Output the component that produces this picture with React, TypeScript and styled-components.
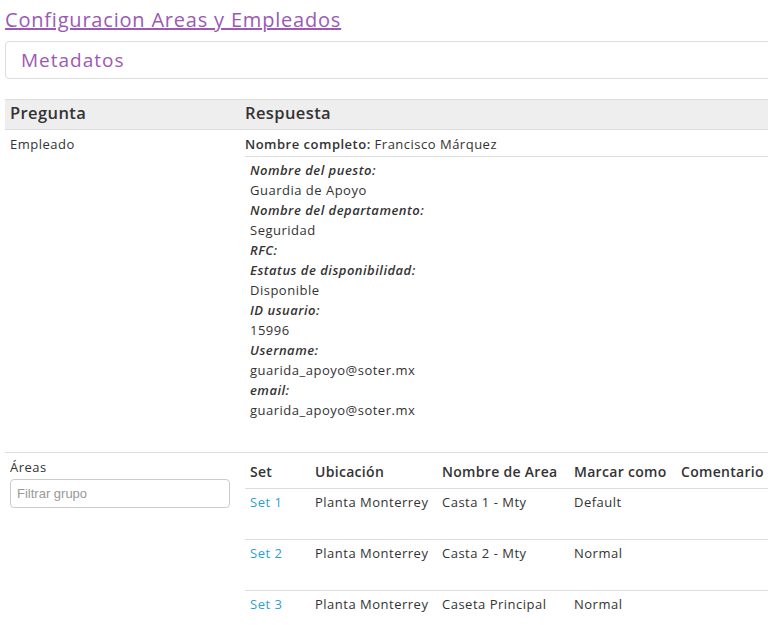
import React from 'react';
import styled, { createGlobalStyle } from 'styled-components';

const GlobalStyle = createGlobalStyle`
  html, body {
    margin: 0;
    padding: 0;
    overflow: hidden;
    background: #fff;
  }
  body {
    font-family: "Open Sans", "Noto Sans", sans-serif;
    color: #333;
    font-size: 13px;
    letter-spacing: 0.5px;
  }
`;

const Page = styled.div`
  width: 820px;
  padding: 6px 0 0 5px;
`;

const TitleLink = styled.a`
  display: inline-block;
  font-size: 20px;
  line-height: 28px;
  letter-spacing: 0.8px;
  color: #9b59b6;
  text-decoration: underline;
  cursor: pointer;
`;

const Panel = styled.div`
  margin-top: 7px;
  border: 1px solid #ddd;
  border-radius: 4px;
  height: 36px;
  display: flex;
  align-items: center;
  padding-left: 15px;
`;

const PanelTitle = styled.div`
  font-size: 19px;
  letter-spacing: 1px;
  color: #9b59b6;
`;

const Table = styled.table`
  margin-top: 20px;
  width: 100%;
  border-collapse: collapse;
`;

const HeadCell = styled.th<{ $w?: number }>`
  background: #eee;
  border-top: 1px solid #ddd;
  border-bottom: 1px solid #ddd;
  text-align: left;
  font-size: 16.5px;
  font-weight: 600;
  letter-spacing: 0.4px;
  height: 25px;
  padding: 0 5px 4px;
  color: #333;
  ${({ $w }) => ($w ? `width: ${$w}px;` : '')}
`;

const Cell = styled.td<{ $w?: number; $inner?: boolean }>`
  vertical-align: top;
  padding: ${({ $inner }) => ($inner ? '0 0 0 5px' : '4px 5px 5px')};
  line-height: 20px;
  ${({ $w }) => ($w ? `width: ${$w}px;` : '')}
`;

const Row = styled.tr<{ $border?: boolean }>`
  ${({ $border }) => ($border ? 'border-top: 1px solid #ddd;' : '')}
`;

const FullName = styled.div`
  padding-bottom: 2px;
  border-bottom: 1px solid #ddd;
`;

const Strong = styled.span`
  font-weight: 600;
`;

const Details = styled.div`
  padding: 3px 5px 27px;
`;

const Label = styled.div`
  font-style: italic;
  font-weight: 600;
`;

const Value = styled.div``;

const AreasLabel = styled.div`
  margin-top: 0;
`;

const FilterInput = styled.input`
  display: block;
  margin-top: 2px;
  box-sizing: border-box;
  width: 220px;
  height: 29px;
  border: 1px solid #ccc;
  border-radius: 4px;
  padding: 0 6px;
  font-family: "Liberation Sans", Arial, sans-serif;
  font-size: 13px;
  letter-spacing: 0;
  color: #555;
  &::placeholder {
    color: #999;
  }
`;

const InnerTable = styled.table`
  border-collapse: collapse;
  width: 100%;
`;

const InnerHead = styled.th<{ $w?: number }>`
  text-align: left;
  font-weight: 600;
  font-size: 14px;
  letter-spacing: 0.3px;
  padding: 9px 5px 6px;
  line-height: 20px;
  border-bottom: 1px solid #ddd;
  white-space: nowrap;
  ${({ $w }) => ($w ? `width: ${$w}px;` : '')}
`;

const InnerCell = styled.td`
  vertical-align: top;
  padding: 3px 5px 0;
  height: 47px;
  line-height: 20px;
  white-space: nowrap;
`;

const InnerRow = styled.tr`
  & + & {
    border-top: 1px solid #ddd;
  }
`;

const SetLink = styled.a`
  color: #2a9fd6;
  cursor: pointer;
`;

const details: [string, string][] = [
  ['Nombre del puesto:', 'Guardia de Apoyo'],
  ['Nombre del departamento:', 'Seguridad'],
  ['RFC:', ''],
  ['Estatus de disponibilidad:', 'Disponible'],
  ['ID usuario:', '15996'],
  ['Username:', 'guarida_apoyo@soter.mx'],
  ['email:', 'guarida_apoyo@soter.mx'],
];

const areas = [
  { set: 'Set 1', ubicacion: 'Planta Monterrey', area: 'Casta 1 - Mty', marca: 'Default' },
  { set: 'Set 2', ubicacion: 'Planta Monterrey', area: 'Casta 2 - Mty', marca: 'Normal' },
  { set: 'Set 3', ubicacion: 'Planta Monterrey', area: 'Caseta Principal', marca: 'Normal' },
];

export default function App() {
  return (
    <>
      <GlobalStyle />
      <Page>
        <TitleLink>Configuracion Areas y Empleados</TitleLink>
        <Panel>
          <PanelTitle>Metadatos</PanelTitle>
        </Panel>
        <Table>
          <thead>
            <tr>
              <HeadCell $w={225}>Pregunta</HeadCell>
              <HeadCell>Respuesta</HeadCell>
            </tr>
          </thead>
          <tbody>
            <Row>
              <Cell $w={225}>Empleado</Cell>
              <Cell>
                <FullName>
                  <Strong>Nombre completo:</Strong> Francisco Márquez
                </FullName>
                <Details>
                  {details.map(([label, value]) => (
                    <React.Fragment key={label}>
                      <Label>{label}</Label>
                      {value && <Value>{value}</Value>}
                    </React.Fragment>
                  ))}
                </Details>
              </Cell>
            </Row>
            <Row $border>
              <Cell $w={225}>
                <AreasLabel>Áreas</AreasLabel>
                <FilterInput placeholder="Filtrar grupo" />
              </Cell>
              <Cell $inner>
                <InnerTable>
                  <thead>
                    <tr>
                      <InnerHead $w={55}>Set</InnerHead>
                      <InnerHead $w={117}>Ubicación</InnerHead>
                      <InnerHead $w={122}>Nombre de Area</InnerHead>
                      <InnerHead $w={97}>Marcar como</InnerHead>
                      <InnerHead>Comentario</InnerHead>
                    </tr>
                  </thead>
                  <tbody>
                    {areas.map((a) => (
                      <InnerRow key={a.set}>
                        <InnerCell>
                          <SetLink>{a.set}</SetLink>
                        </InnerCell>
                        <InnerCell>{a.ubicacion}</InnerCell>
                        <InnerCell>{a.area}</InnerCell>
                        <InnerCell>{a.marca}</InnerCell>
                        <InnerCell></InnerCell>
                      </InnerRow>
                    ))}
                  </tbody>
                </InnerTable>
              </Cell>
            </Row>
          </tbody>
        </Table>
      </Page>
    </>
  );
}
